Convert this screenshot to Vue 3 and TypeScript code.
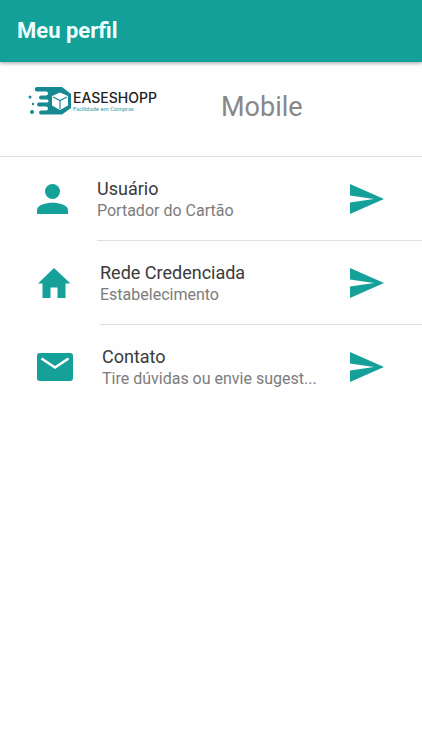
<script setup lang="ts">
interface ProfileItem {
  id: string
  title: string
  note: string
  icon: 'person' | 'home' | 'mail'
}

const items: ProfileItem[] = [
  { id: 'usuario', title: 'Usuário', note: 'Portador do Cartão', icon: 'person' },
  { id: 'rede', title: 'Rede Credenciada', note: 'Estabelecimento', icon: 'home' },
  { id: 'contato', title: 'Contato', note: 'Tire dúvidas ou envie sugest...', icon: 'mail' },
]
</script>

<template>
  <div class="page">
    <header class="toolbar">
      <h1 class="toolbar-title">Meu perfil</h1>
    </header>

    <main>
      <section class="brand">
        <div class="logo">
          <svg class="logo-mark" width="45" height="30" viewBox="0 0 45 30" aria-hidden="true">
            <g fill="#178a91">
              <path d="M9 1H34L43 8V22L34 28.500H13A2 2 0 0 1 13 24.500H18A2 2 0 0 0 18 20.500H11A2 2 0 0 1 11 16.500H19A1.500 1.500 0 0 0 19 13.500H13A2 2 0 0 1 13 9.500H18A2 2 0 0 0 18 5.500H9A2.200 2.200 0 0 1 9 1Z" />
              <circle cx="2" cy="11" r="1.500" />
              <circle cx="5" cy="18" r="1.200" />
              <circle cx="4" cy="26" r="2" />
            </g>
            <path d="M32 6.500L40 10V19.500L32 24L24 19.500V10Z" fill="#fff" />
            <path d="M25 11L32 14.500L39 11M32 14.500V23" fill="none" stroke="#178a91" stroke-width="1.200" />
          </svg>
          <div class="logo-text">
            <span class="logo-name">EASESHOPP</span>
            <span class="logo-tag">Facilidade em Compras</span>
          </div>
        </div>
        <h2 class="brand-title">Mobile</h2>
      </section>

      <ul class="list">
        <li v-for="item in items" :key="item.id">
          <button type="button" class="item">
            <svg v-if="item.icon === 'person'" class="icon" width="31" height="30" viewBox="0 0 31 30" aria-hidden="true">
              <circle cx="15.500" cy="7.500" r="7.500" />
              <path d="M0 30V26C0 21 9 18.800 15.500 18.800S31 21 31 26V30Z" />
            </svg>
            <svg v-else-if="item.icon === 'home'" class="icon" width="34" height="30" viewBox="0 0 34 30" aria-hidden="true">
              <path d="M13.500 30V19.500H20.500V30H28.500V15.500H33.500L17 0L1 15.500H5.500V30Z" />
            </svg>
            <svg v-else class="icon" width="36" height="28" viewBox="0 0 36 28" aria-hidden="true">
              <rect width="36" height="28" rx="3" />
              <path d="M4.500 5.500L18 14.500L31.500 5.500" fill="none" stroke="#fff" stroke-width="2.600" />
            </svg>
            <span class="item-inner">
              <span class="item-label">
                <span class="item-title">{{ item.title }}</span>
                <span class="item-note">{{ item.note }}</span>
              </span>
              <svg class="icon" width="34" height="30" viewBox="0 0 34 30" aria-hidden="true">
                <path d="M0 0L34 15L0 30V18.500L24 15L0 11.500Z" />
              </svg>
            </span>
          </button>
        </li>
      </ul>
    </main>
  </div>
</template>

<style>
body {
  background: #fefefe;
}
</style>

<style scoped>
.page {
  font-family: Roboto, sans-serif;
  color: #333;
}

.toolbar {
  display: flex;
  align-items: center;
  height: 62px;
  padding: 0 17px;
  box-sizing: border-box;
  background: #12a099;
  box-shadow: 0 1px 4px rgba(0, 0, 0, 0.4);
}

.toolbar-title {
  margin: 0;
  font-size: 22px;
  line-height: 28px;
  font-weight: 700;
  color: #effffd;
}

.brand {
  display: grid;
  grid-template-columns: 193px 1fr;
  align-items: center;
  height: 95px;
  padding: 0 16px 4px 28px;
  box-sizing: border-box;
  border-bottom: 1px solid #dedede;
}

.logo {
  display: flex;
  align-items: center;
  padding-bottom: 12px;
}

.logo-text {
  display: flex;
  flex-direction: column;
  font-family: Inter, sans-serif;
}

.logo-name {
  font-size: 14px;
  line-height: 16px;
  font-weight: 500;
  color: #222;
}

.logo-tag {
  font-family: Lato, sans-serif;
  font-size: 6px;
  line-height: 6px;
  color: #2f9aa0;
}

.brand-title {
  margin: 0;
  font-size: 27px;
  line-height: 32px;
  font-weight: 400;
  color: #888;
}

.list {
  margin: 0;
  padding: 0;
  list-style: none;
}

.item {
  display: flex;
  align-items: center;
  gap: 29px;
  width: 100%;
  padding: 0 0 0 37px;
  border: 0;
  background: none;
  font: inherit;
  text-align: left;
  cursor: pointer;
}

.icon {
  flex: none;
  fill: #15a099;
}

.item-inner {
  display: flex;
  flex: 1;
  align-items: center;
  justify-content: space-between;
  min-width: 0;
  height: 84px;
  padding-right: 38px;
  box-sizing: border-box;
  border-bottom: 1px solid #dedede;
}

li:last-child .item-inner {
  border-bottom: 0;
}

.item-label {
  display: flex;
  flex-direction: column;
  padding-top: 2px;
  white-space: nowrap;
}

.item-title {
  font-size: 18px;
  line-height: 22px;
  color: #3a3a3a;
}

.item-note {
  font-size: 16px;
  line-height: 22px;
  color: #7c7c7c;
}
</style>
